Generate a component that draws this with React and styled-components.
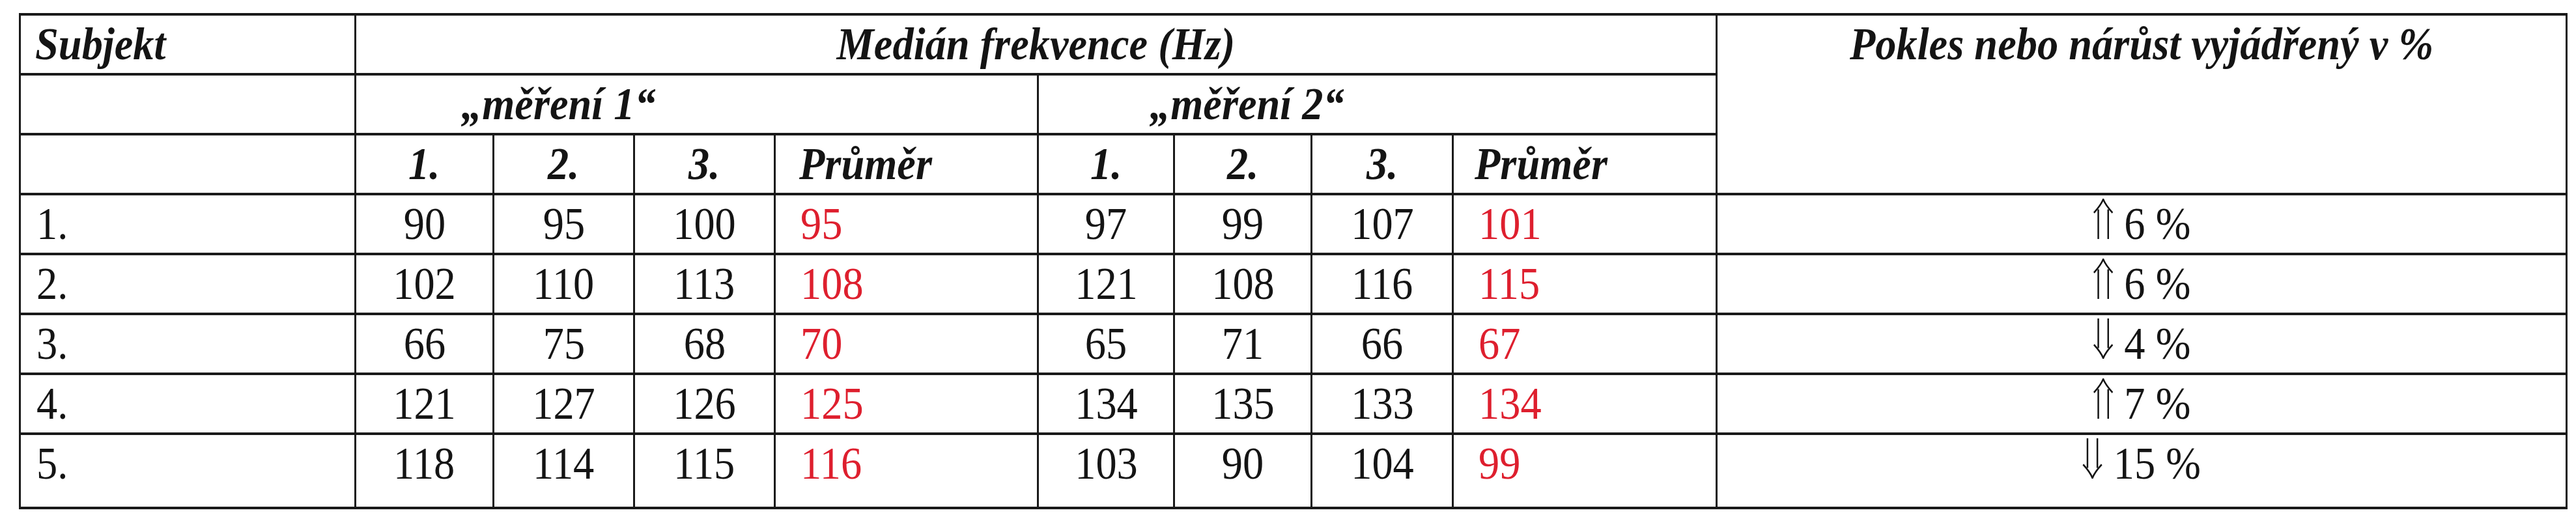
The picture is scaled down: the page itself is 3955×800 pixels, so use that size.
import React from "react";
import styled, { createGlobalStyle } from "styled-components";

const GlobalStyle = createGlobalStyle`
  html, body {
    margin: 0;
    padding: 0;
    background: #fff;
  }
`;

const widths = [515, 212, 216, 216, 404, 209, 211, 217, 405, 1305];

const rows = [
  { id: "1.", m1: [90, 95, 100], avg1: 95, m2: [97, 99, 107], avg2: 101, dir: "up", change: "6 %" },
  { id: "2.", m1: [102, 110, 113], avg1: 108, m2: [121, 108, 116], avg2: 115, dir: "up", change: "6 %" },
  { id: "3.", m1: [66, 75, 68], avg1: 70, m2: [65, 71, 66], avg2: 67, dir: "down", change: "4 %" },
  { id: "4.", m1: [121, 127, 126], avg1: 125, m2: [134, 135, 133], avg2: 134, dir: "up", change: "7 %" },
  { id: "5.", m1: [118, 114, 115], avg1: 116, m2: [103, 90, 104], avg2: 99, dir: "down", change: "15 %" },
];

function App() {
  return (
    <Page>
      <GlobalStyle />
      <Table>
        <colgroup>
          {widths.map((w, i) => (
            <col key={i} style={{ width: w }} />
          ))}
        </colgroup>
        <thead>
          <Row>
            <HeadCell $align="left">
              <Text $origin="left">Subjekt</Text>
            </HeadCell>
            <HeadCell colSpan={8}>
              <Text>Medián frekvence (Hz)</Text>
            </HeadCell>
            <HeadCell rowSpan={3}>
              <Text>Pokles nebo nárůst vyjádřený v %</Text>
            </HeadCell>
          </Row>
          <Row>
            <HeadCell />
            <HeadCell colSpan={4} $align="left" $indent={161}>
              <Text $origin="left">„měření 1“</Text>
            </HeadCell>
            <HeadCell colSpan={4} $align="left" $indent={170}>
              <Text $origin="left">„měření 2“</Text>
            </HeadCell>
          </Row>
          <Row>
            <HeadCell />
            <HeadCell><Text>1.</Text></HeadCell>
            <HeadCell><Text>2.</Text></HeadCell>
            <HeadCell><Text>3.</Text></HeadCell>
            <HeadCell $align="left" $indent={36}>
              <Text $origin="left">Průměr</Text>
            </HeadCell>
            <HeadCell><Text>1.</Text></HeadCell>
            <HeadCell><Text>2.</Text></HeadCell>
            <HeadCell><Text>3.</Text></HeadCell>
            <HeadCell $align="left" $indent={32}>
              <Text $origin="left">Průměr</Text>
            </HeadCell>
          </Row>
        </thead>
        <tbody>
          {rows.map((r, i) => (
            <Row key={r.id} $last={i === rows.length - 1}>
              <Cell $align="left">
                <Text $origin="left">{r.id}</Text>
              </Cell>
              {r.m1.map((v, j) => (
                <Cell key={"a" + j}>
                  <Text>{v}</Text>
                </Cell>
              ))}
              <MeanCell>
                <Text $origin="left">{r.avg1}</Text>
              </MeanCell>
              {r.m2.map((v, j) => (
                <Cell key={"b" + j}>
                  <Text>{v}</Text>
                </Cell>
              ))}
              <MeanCell>
                <Text $origin="left">{r.avg2}</Text>
              </MeanCell>
              <Cell>
                <Text>
                  <Arrow dir={r.dir} />
                  {r.change}
                </Text>
              </Cell>
            </Row>
          ))}
        </tbody>
      </Table>
    </Page>
  );
}

function Arrow({ dir }) {
  return (
    <ArrowSvg viewBox="0 0 32 60" $down={dir === "down"}>
      <path d="M8 16 L8 60 M24 16 L24 60" />
      <path d="M1 21 C7 15 13 8 16 1 C19 8 25 15 31 21" />
    </ArrowSvg>
  );
}

const Page = styled.div`
  padding: 20px 0 0 29px;
`;

const Table = styled.table`
  border-collapse: collapse;
  table-layout: fixed;
  width: 3910px;
  font-family: "Liberation Serif", "Times New Roman", serif;
  font-size: 70px;
  color: #141414;
`;

const Row = styled.tr`
  height: ${(p) => (p.$last ? 114 : 92)}px;
`;

const baseCell = `
  border-style: solid;
  border-color: #1a1a1a;
  border-width: 4px 3px;
  padding: 0;
  vertical-align: top;
  line-height: 88px;
  white-space: nowrap;
  overflow: hidden;
`;

const Text = styled.span`
  display: inline-block;
  transform: scaleX(0.92);
  transform-origin: ${(p) => p.$origin || "center"} center;
`;

const HeadCell = styled.td`
  ${baseCell}
  font-weight: bold;
  font-style: italic;
  text-align: ${(p) => p.$align || "center"};
  padding-left: ${(p) => (p.$indent != null ? p.$indent : p.$align === "left" ? 22 : 0)}px;
`;

const Cell = styled.td`
  ${baseCell}
  text-align: ${(p) => p.$align || "center"};
  padding-left: ${(p) => (p.$align === "left" ? 24 : 0)}px;
`;

const MeanCell = styled(Cell)`
  color: #de1f2e;
  text-align: left;
  padding-left: 38px;
`;

const ArrowSvg = styled.svg`
  width: 34px;
  height: 62px;
  margin-right: 18px;
  vertical-align: baseline;
  fill: none;
  stroke: #141414;
  stroke-width: 2.6;
  transform: ${(p) => (p.$down ? "scaleY(-1)" : "none")};
`;

export default App;
